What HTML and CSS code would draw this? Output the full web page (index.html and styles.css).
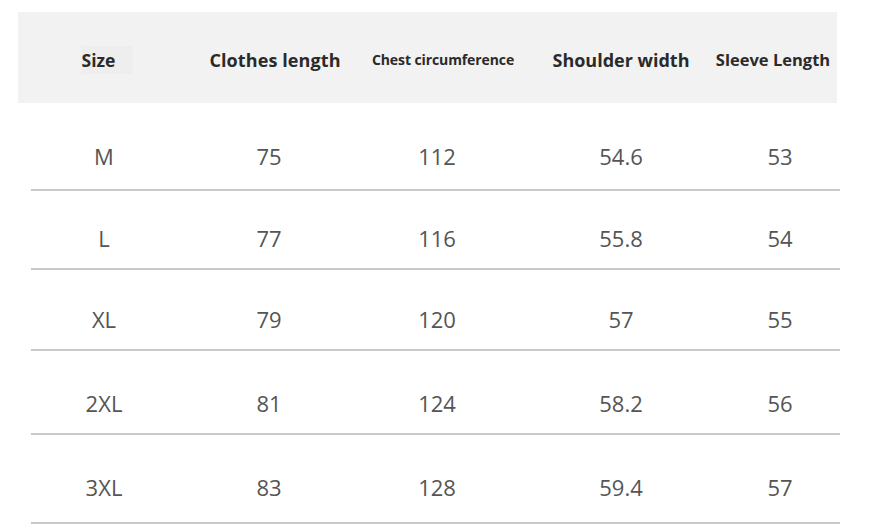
FILE: index.html
```html
<!DOCTYPE html>
<html lang="en">
<head>
<meta charset="utf-8">
<title>Size chart</title>
<link rel="stylesheet" href="styles.css">
</head>
<body>
<div class="chart">
  <div class="head">
    <div class="hc hc1"><span class="size-box">Size</span></div>
    <div class="hc hc2">Clothes length</div>
    <div class="hc hc3">Chest circumference</div>
    <div class="hc hc4">Shoulder width</div>
    <div class="hc hc5">Sleeve Length</div>
  </div>
  <div class="rows">
    <div class="row row-first"><div class="c c1">M</div><div class="c c2">75</div><div class="c c3">112</div><div class="c c4">54.6</div><div class="c c5">53</div></div>
    <div class="row"><div class="c c1">L</div><div class="c c2">77</div><div class="c c3">116</div><div class="c c4">55.8</div><div class="c c5">54</div></div>
    <div class="row"><div class="c c1">XL</div><div class="c c2">79</div><div class="c c3">120</div><div class="c c4">57</div><div class="c c5">55</div></div>
    <div class="row"><div class="c c1">2XL</div><div class="c c2">81</div><div class="c c3">124</div><div class="c c4">58.2</div><div class="c c5">56</div></div>
    <div class="row row-last"><div class="c c1">3XL</div><div class="c c2">83</div><div class="c c3">128</div><div class="c c4">59.4</div><div class="c c5">57</div></div>
  </div>
</div>
</body>
</html>
```

FILE: styles.css
```css
html, body {
  margin: 0;
  padding: 0;
  background: #ffffff;
}
body {
  font-family: "Open Sans", "Liberation Sans", sans-serif;
}
.chart {
  padding-top: 12px;
  width: 875px;
  height: 529px;
  box-sizing: border-box;
  overflow: hidden;
}
.head {
  margin-left: 18px;
  width: 819px;
  height: 91px;
  background: #f2f2f2;
  display: flex;
  align-items: center;
  padding-top: 4px;
  box-sizing: border-box;
  color: #2a2a2a;
  font-weight: 700;
}
.hc {
  display: flex;
  justify-content: center;
  white-space: nowrap;
  line-height: 28px;
}
.hc1 { width: 160px; font-size: 17.5px; }
.hc2 { width: 194px; font-size: 18px; letter-spacing: 0.1px; }
.hc3 { width: 142px; font-size: 14px; letter-spacing: -0.1px; }
.hc4 { width: 214px; font-size: 18px; }
.hc5 { width: 90px; font-size: 16.5px; }
.size-box {
  background: #eeeeee;
  padding: 0 18px 0 1px;
  margin-left: 18px;
}
.rows {
  margin-left: 31px;
  width: 809px;
  display: grid;
  grid-template-rows: 88px 79px 81px 84px 89px;
}
.row {
  display: flex;
  align-items: flex-end;
  border-bottom: 2px solid #c9c9c9;
  padding-bottom: 15px;
  color: #555555;
  font-size: 22px;
}
.row-first { padding-bottom: 18px; }
.row-last { padding-bottom: 20px; }
.c {
  display: flex;
  justify-content: center;
  line-height: 30px;
  white-space: nowrap;
}
.c1 { width: 146px; }
.c2 { width: 184px; }
.c3 { width: 152px; }
.c4 { width: 216px; }
.c5 { width: 102px; }
```
